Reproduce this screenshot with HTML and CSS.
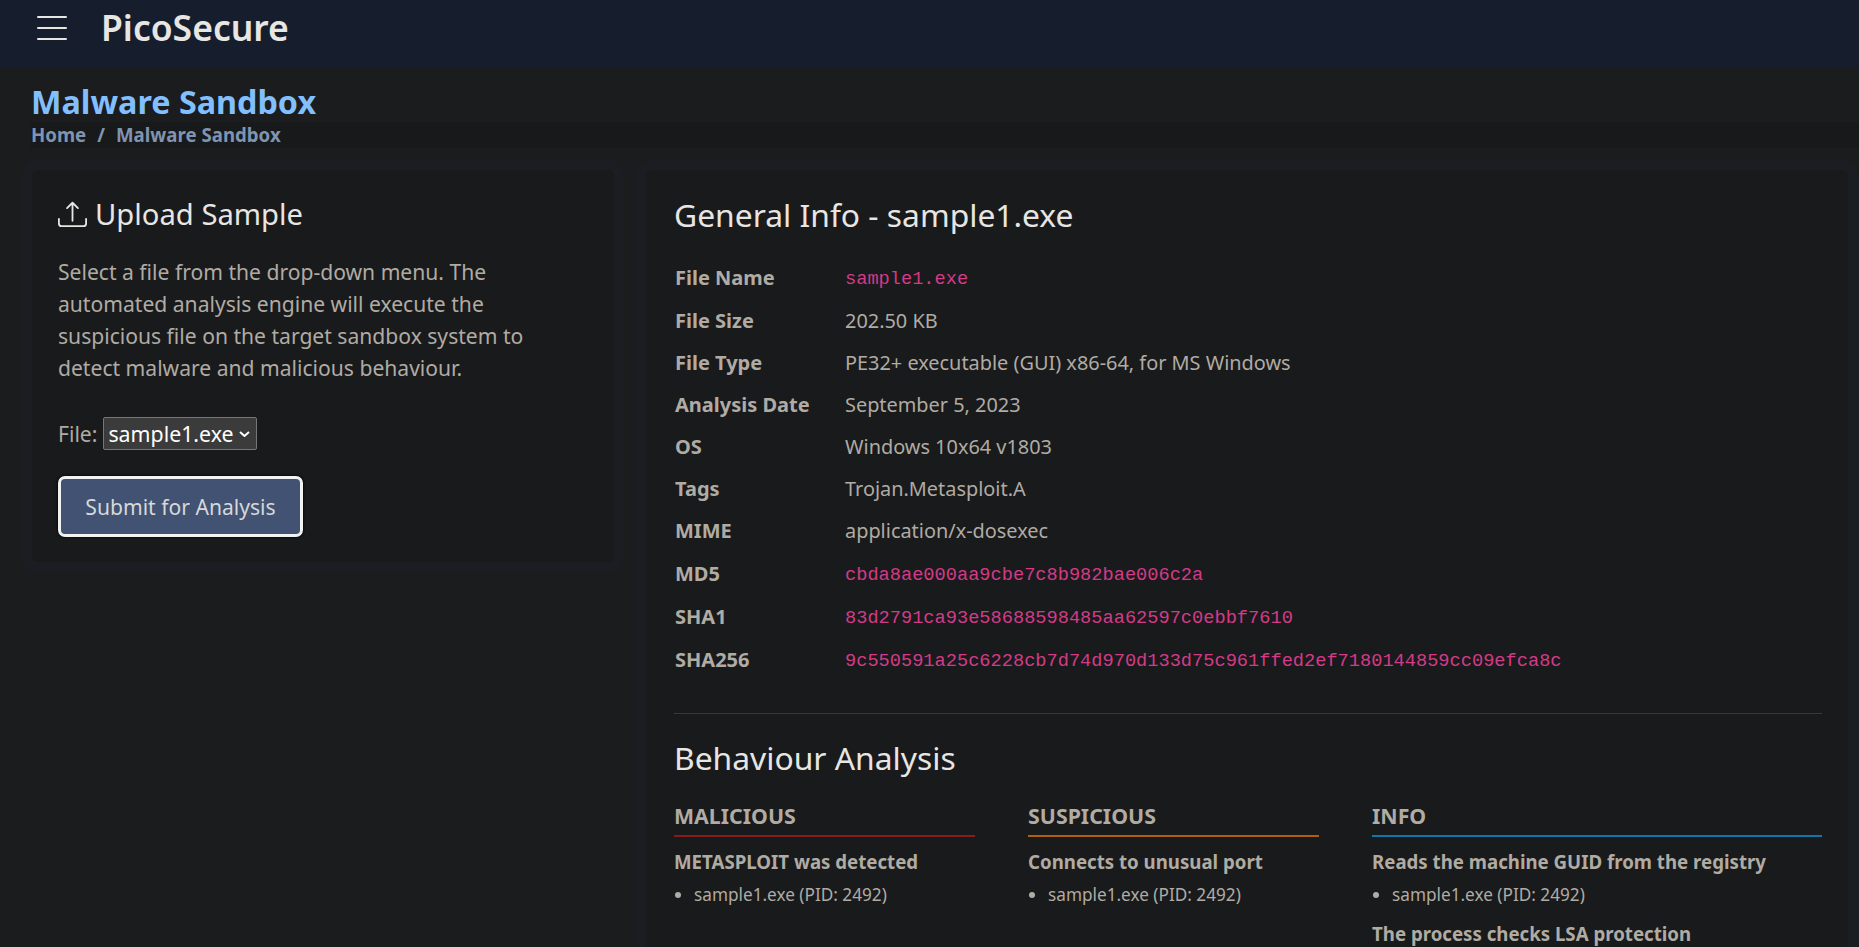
FILE: index.html
```html
<!DOCTYPE html>
<html lang="en">
<head>
    <meta charset="UTF-8">
    <title>PicoSecure - Malware Sandbox</title>
    <link rel="stylesheet" href="styles.css">
</head>
<body>

<nav class="navbar">
    <svg class="menu-icon" width="30" height="24" viewBox="0 0 30 24" fill="none" stroke="#e8e6e3" stroke-width="2" stroke-linecap="round">
        <path d="M1 1h28M1 12h28M1 23h28"/>
    </svg>
    <span class="brand">PicoSecure</span>
</nav>

<div class="page-title">
    <h1>Malware Sandbox</h1>
    <div class="breadcrumb">
        <span>Home</span>
        <span class="sep">/</span>
        <span>Malware Sandbox</span>
    </div>
</div>

<main class="columns">
    <section class="card upload-card">
        <h2 class="upload-title">
            <svg width="29" height="29" viewBox="0 0 16 16" fill="#e8e6e3">
                <path d="M.5 9.9a.5.5 0 0 1 .5.5v2.5a1 1 0 0 0 1 1h12a1 1 0 0 0 1-1v-2.5a.5.5 0 0 1 1 0v2.5a2 2 0 0 1-2 2H2a2 2 0 0 1-2-2v-2.5a.5.5 0 0 1 .5-.5z"/>
                <path d="M7.646 1.146a.5.5 0 0 1 .708 0l3 3a.5.5 0 0 1-.708.708L8.5 2.707V11.5a.5.5 0 0 1-1 0V2.707L5.354 4.854a.5.5 0 1 1-.708-.708l3-3z"/>
            </svg>
            Upload Sample
        </h2>
        <p class="upload-text">Select a file from the drop-down menu. The automated analysis engine will execute the suspicious file on the target sandbox system to detect malware and malicious behaviour.</p>
        <form>
            <div class="file-row">
                <label for="file">File:</label>
                <select id="file">
                    <option>sample1.exe</option>
                </select>
            </div>
            <button type="button" class="submit-btn">Submit for Analysis</button>
        </form>
    </section>

    <section class="card report-card">
        <h2 class="section-title">General Info - sample1.exe</h2>
        <table class="info-table">
            <tr class="first-row"><th>File Name</th><td><code>sample1.exe</code></td></tr>
            <tr><th>File Size</th><td>202.50 KB</td></tr>
            <tr><th>File Type</th><td>PE32+ executable (GUI) x86-64, for MS Windows</td></tr>
            <tr><th>Analysis Date</th><td>September 5, 2023</td></tr>
            <tr><th>OS</th><td>Windows 10x64 v1803</td></tr>
            <tr><th>Tags</th><td>Trojan.Metasploit.A</td></tr>
            <tr><th>MIME</th><td>application/x-dosexec</td></tr>
            <tr><th>MD5</th><td><code>cbda8ae000aa9cbe7c8b982bae006c2a</code></td></tr>
            <tr><th>SHA1</th><td><code>83d2791ca93e58688598485aa62597c0ebbf7610</code></td></tr>
            <tr><th>SHA256</th><td><code>9c550591a25c6228cb7d74d970d133d75c961ffed2ef7180144859cc09efca8c</code></td></tr>
        </table>

        <hr class="divider">

        <h2 class="section-title">Behaviour Analysis</h2>
        <div class="behaviour">
            <div>
                <h3 class="level malicious">MALICIOUS</h3>
                <h4>METASPLOIT was detected</h4>
                <ul><li>sample1.exe (PID: 2492)</li></ul>
            </div>
            <div>
                <h3 class="level suspicious">SUSPICIOUS</h3>
                <h4>Connects to unusual port</h4>
                <ul><li>sample1.exe (PID: 2492)</li></ul>
            </div>
            <div>
                <h3 class="level info">INFO</h3>
                <h4>Reads the machine GUID from the registry</h4>
                <ul><li>sample1.exe (PID: 2492)</li></ul>
                <h4>The process checks LSA protection</h4>
            </div>
        </div>
    </section>
</main>

</body>
</html>
```

FILE: styles.css
```css
html, body {
    height: 947px;
    overflow: hidden;
}
body {
    font-family: "Noto Sans", sans-serif;
    font-size: 21.1px;
    line-height: 1.5;
    background-color: #1a1c1e;
    color: #b0aba3;
    margin: 0;
}
.navbar {
    display: flex;
    align-items: flex-start;
    height: 68px;
    padding: 0 37px;
    background-color: #161e2e;
    box-sizing: border-box;
}
.menu-icon {
    margin-top: 16px;
}
.brand {
    margin-left: 34px;
    font-size: 35.5px;
    font-weight: 600;
    line-height: 54px;
    color: #e8e6e3;
}
.page-title {
    padding: 13px 0 0 31px;
}
.page-title h1 {
    margin: 0;
    font-size: 32.3px;
    font-weight: 700;
    line-height: 41px;
    color: #82bfff;
}
.breadcrumb {
    display: flex;
    gap: 11px;
    font-size: 18.67px;
    font-weight: 700;
    line-height: 26px;
    color: #7f94b0;
    background-color: #18191b;
}
.columns {
    display: grid;
    grid-template-columns: 582px 1fr;
    gap: 32px;
    padding: 22px 11px 0 32px;
}
.card {
    background-color: #191a1c;
    border-radius: 6px;
    padding: 25px 26px 26px;
    box-shadow: 0 0 0 10px #1a1e22;
}
.upload-card {
    align-self: start;
    height: 392px;
    box-sizing: border-box;
}
.report-card {
    padding: 23px 26px 0 28px;
}
.upload-title {
    display: flex;
    align-items: center;
    gap: 8px;
    margin: 0 0 23px;
    font-size: 29.2px;
    font-weight: 400;
    line-height: 38px;
    color: #e8e6e3;
}
.upload-text {
    margin: 0 0 33px;
    width: 500px;
    line-height: 32px;
}
.file-row {
    display: flex;
    align-items: center;
    gap: 6px;
}
select {
    appearance: none;
    font-family: "Noto Sans", sans-serif;
    font-size: 21.33px;
    color: #fff;
    background-color: #3b3b3b;
    background-image: url("data:image/svg+xml,%3Csvg xmlns='http://www.w3.org/2000/svg' width='11' height='6' fill='none' stroke='white' stroke-width='2'%3E%3Cpath d='M1 1l4.5 4 4.5-4'/%3E%3C/svg%3E");
    background-repeat: no-repeat;
    background-position: right 6px center;
    border: 1px solid #767676;
    border-radius: 2px;
    padding: 0 0 0 4px;
    width: 154px;
    height: 33px;
}
.submit-btn {
    margin-top: 26px;
    width: 245px;
    height: 61px;
    font-family: "Noto Sans", sans-serif;
    font-size: 21.1px;
    color: #d8d8d8;
    background-color: #415273;
    border: 3px solid #f2f2f2;
    border-radius: 7px;
    box-shadow: 0 0 2px 1px #0c0c0c;
}
.section-title {
    margin: 0;
    font-size: 31.8px;
    font-weight: 400;
    line-height: 44px;
    color: #e8e6e3;
}
.info-table {
    margin-top: 19px;
    border-collapse: collapse;
}
.info-table th {
    width: 170px;
    padding: 6px 0 6px 1px;
    text-align: left;
    font-size: 20px;
    font-weight: 700;
    line-height: 30px;
}
.info-table td {
    padding: 6px 0;
    font-size: 19.9px;
    line-height: 30px;
}
.first-row td {
    padding-bottom: 7px;
}
code {
    display: inline-block;
    vertical-align: top;
    padding-top: 3px;
    font-family: "Liberation Mono", monospace;
    font-size: 18.67px;
    line-height: 28px;
    color: #d33a87;
}
.divider {
    margin: 32px 0 22px;
    border: 0;
    border-top: 1px solid #363a3d;
}
.behaviour {
    display: grid;
    grid-template-columns: 301px 291px 1fr;
    gap: 53px;
    margin-top: 20px;
}
.level {
    margin: 0;
    font-size: 21.33px;
    font-weight: 700;
    line-height: 32px;
    padding-bottom: 3px;
    border-bottom: 2px solid;
}
.malicious { border-color: #8b1a1a; }
.suspicious { border-color: #b05f0c; }
.info { border-color: #0f75ad; }
.behaviour h4 {
    margin: 10px 0 0;
    font-size: 18.67px;
    font-weight: 700;
    line-height: 30px;
}
.behaviour ul {
    margin: 4px 0 10px;
    padding-left: 20px;
    font-size: 17.2px;
    line-height: 28px;
}
```
